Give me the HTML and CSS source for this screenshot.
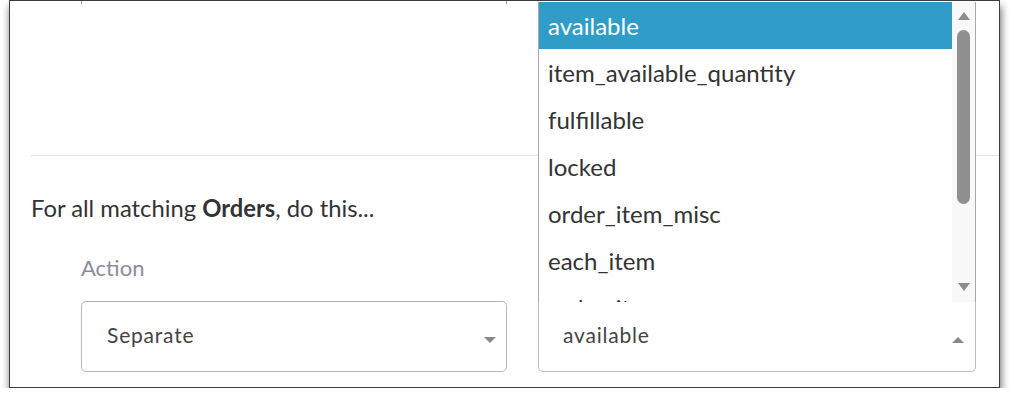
FILE: index.html
```html
<!DOCTYPE html>
<html lang="en">
<head>
  <meta charset="UTF-8">
  <title>Rule action</title>
  <link rel="stylesheet" href="styles.css">
</head>
<body>

  <div class="window">
    <!-- bottom edge of the previous row, scrolled out of view -->
    <div class="prev-row">
      <div class="prev-box"></div>
    </div>

    <div class="divider"></div>

    <div class="section">
      <p class="intro">For all matching <b>Orders</b>, do this...</p>

      <div class="fields">
        <div class="field field-action">
          <div class="field-label">Action</div>
          <div class="select">
            <span class="select-value">Separate</span>
            <span class="caret caret-down"></span>
          </div>
        </div>

        <div class="field field-target">
          <!-- label sits under the open list -->
          <div class="field-label"></div>
          <div class="select select-open">
            <span class="select-value">available</span>
            <span class="caret caret-up"></span>

            <!-- open option list -->
            <div class="dropdown">
              <ul class="options">
                <li class="option active">available</li>
                <li class="option">item_available_quantity</li>
                <li class="option">fulfillable</li>
                <li class="option">locked</li>
                <li class="option">order_item_misc</li>
                <li class="option">each_item</li>
                <li class="option">order_item</li>
              </ul>
              <div class="scrollbar">
                <span class="arrow arrow-up"></span>
                <div class="thumb"></div>
                <span class="arrow arrow-down"></span>
              </div>
            </div>
          </div>
        </div>
      </div>
    </div>
  </div>

</body>
</html>
```

FILE: styles.css
```css
body {
  margin: 0;
  padding: 0;
  background: #ffffff;
  font-family: Lato, "Open Sans", sans-serif;
  color: #333333;
}

.window {
  box-sizing: border-box;
  width: 991px;
  height: 388px;
  margin-left: 9px;
  background: #ffffff;
  border: 1px solid #3d3d3d;
  box-shadow: 1px 6px 8px rgba(0, 0, 0, 0.6);
  overflow: hidden;
}

.prev-row {
  height: 154px;
}

.prev-box {
  box-sizing: border-box;
  width: 426px;
  height: 3px;
  margin-left: 71px;
  border-left: 1px solid #9a9a9a;
  border-right: 1px solid #9a9a9a;
}

.divider {
  height: 1px;
  margin-left: 21px;
  background: #e2e2e2;
}

.section {
  padding: 37px 0 0 21px;
}

.intro {
  margin: 0;
  font-size: 23.8px;
  line-height: 30px;
  color: #333333;
}

.intro b {
  font-weight: 700;
}

.fields {
  display: flex;
  gap: 31px;
  margin-left: 50px;
  margin-top: 32px;
}

.field {
  position: relative;
}

.field-action {
  width: 426px;
}

.field-target {
  width: 438px;
}

.field-label {
  height: 26px;
  font-size: 22px;
  line-height: 26px;
  color: #8b8a9b;
  margin-bottom: 20px;
}

.select {
  position: relative;
  box-sizing: border-box;
  height: 71px;
  display: flex;
  align-items: center;
  justify-content: space-between;
  padding: 0 10px 4px 25px;
  border: 1px solid #b5b5b5;
  border-radius: 5px;
  font-size: 21px;
  letter-spacing: 0.8px;
  color: #444444;
}

.select-open {
  padding-left: 24px;
  border-color: #bcbcbc;
  border-top-color: #a8a8a8;
  border-radius: 0 0 5px 5px;
}

.caret {
  width: 0;
  height: 0;
  border-left: 6px solid transparent;
  border-right: 6px solid transparent;
  margin-top: 10px;
}

.caret-down {
  border-top: 6px solid #888888;
}

.caret-up {
  border-bottom: 6px solid #888888;
  margin-right: 1px;
}

.dropdown {
  position: absolute;
  left: -1px;
  right: -1px;
  bottom: 100%;
  height: 300px;
  display: flex;
  background: #ffffff;
  border-left: 1px solid #a8a8a8;
  border-right: 1px solid #a8a8a8;
  overflow: hidden;
  letter-spacing: 0;
}

.options {
  flex: 1;
  margin: 0;
  padding: 0;
  list-style: none;
}

.option {
  height: 47px;
  line-height: 47px;
  padding-left: 9px;
  font-size: 24px;
  color: #333333;
}

.option.active {
  background: #2f9dc7;
  color: #ffffff;
}

.scrollbar {
  width: 23px;
  display: flex;
  flex-direction: column;
  align-items: center;
  background: #f8f8f8;
}

.arrow {
  width: 0;
  height: 0;
  border-left: 6px solid transparent;
  border-right: 6px solid transparent;
}

.arrow-up {
  margin-top: 10px;
  border-bottom: 8px solid #8c8c8c;
}

.arrow-down {
  margin-top: 79px;
  border-top: 8px solid #8c8c8c;
}

.thumb {
  width: 13px;
  height: 174px;
  margin-top: 10px;
  border-radius: 7px;
  background: #8f8f8f;
}
```
